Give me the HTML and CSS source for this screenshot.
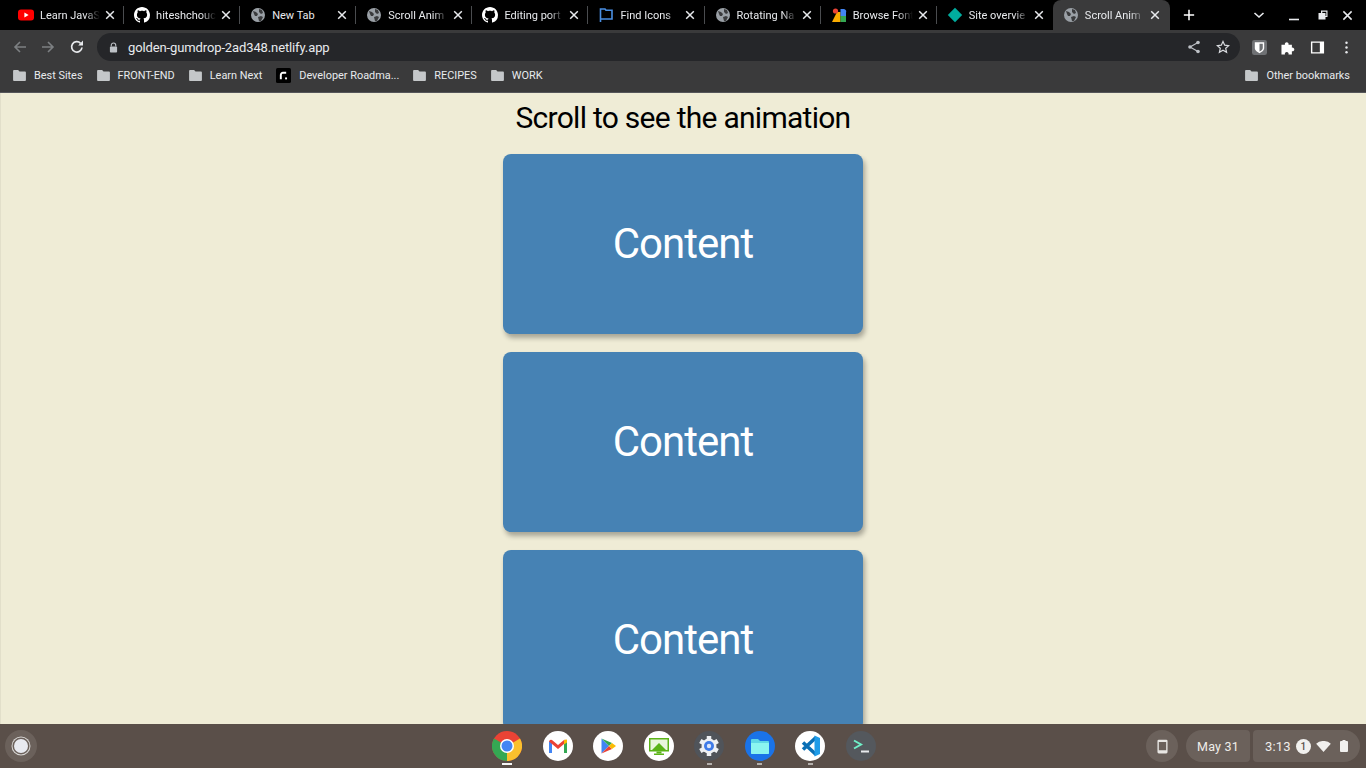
FILE: index.html
```html
<!DOCTYPE html>
<html lang="en">
<head>
  <meta charset="UTF-8">
  <meta name="viewport" content="width=device-width, initial-scale=1.0">
  <title>Scroll Animation</title>
  <link rel="stylesheet" href="styles.css">
</head>
<body>
  <svg class="defs" width="0" height="0">
    <symbol id="globe" viewBox="0 0 16 16">
      <circle cx="8" cy="8" r="7" fill="#9aa0a6"/>
      <path d="M3 4l3 1 2 2-1 2-2 0-1-2zM9 2l3 1 1 3-2 1-2-2zM8 10l3-1 2 1-2 4-2 0z" fill="#3a3b3d"/>
    </symbol>
    <symbol id="github" viewBox="0 0 16 16">
      <path fill="#fff" d="M8 0C3.58 0 0 3.58 0 8c0 3.54 2.29 6.53 5.47 7.59.4.07.55-.17.55-.38 0-.19-.01-.82-.01-1.49-2.01.37-2.53-.49-2.69-.94-.09-.23-.48-.94-.82-1.13-.28-.15-.68-.52-.01-.53.63-.01 1.08.58 1.23.82.72 1.21 1.87.87 2.33.66.07-.52.28-.87.51-1.07-1.78-.2-3.64-.89-3.64-3.95 0-.87.31-1.59.82-2.15-.08-.2-.36-1.02.08-2.12 0 0 .67-.21 2.2.82.64-.18 1.32-.27 2-.27s1.36.09 2 .27c1.53-1.04 2.2-.82 2.2-.82.44 1.1.16 1.92.08 2.12.51.56.82 1.27.82 2.15 0 3.07-1.87 3.75-3.65 3.95.29.25.54.73.54 1.48 0 1.07-.01 1.93-.01 2.2 0 .21.15.46.55.38A8.01 8.01 0 0 0 16 8c0-4.42-3.58-8-8-8z"/>
    </symbol>
    <symbol id="folder" viewBox="0 0 14 12">
      <path fill="#c4c7c9" d="M1 0h4.500l1.500 1.600h6a1 1 0 0 1 1 1V11a1 1 0 0 1-1 1H1a1 1 0 0 1-1-1V1a1 1 0 0 1 1-1z"/>
    </symbol>
    <symbol id="close" viewBox="0 0 10 10">
      <path d="M1.200 1.200l7.600 7.600M8.800 1.200L1.200 8.800" stroke="#e8eaed" stroke-width="1.500" fill="none"/>
    </symbol>
  </svg>

  <!-- Tab strip -->
  <div class="tab-strip">
    <div class="tab">
      <svg class="tab-icon" viewBox="0 0 16 16"><rect y="2.500" width="16" height="11" rx="3" fill="#f00"/><path d="M6.400 5.500l4.200 2.500-4.200 2.500z" fill="#fff"/></svg>
      <span class="tab-title">Learn JavaS</span>
      <svg class="tab-close"><use href="#close"/></svg>
    </div>
    <div class="tab">
      <svg class="tab-icon"><use href="#github"/></svg>
      <span class="tab-title">hiteshchouc</span>
      <svg class="tab-close"><use href="#close"/></svg>
    </div>
    <div class="tab">
      <svg class="tab-icon"><use href="#globe"/></svg>
      <span class="tab-title plain">New Tab</span>
      <svg class="tab-close"><use href="#close"/></svg>
    </div>
    <div class="tab">
      <svg class="tab-icon"><use href="#globe"/></svg>
      <span class="tab-title">Scroll Anim</span>
      <svg class="tab-close"><use href="#close"/></svg>
    </div>
    <div class="tab">
      <svg class="tab-icon"><use href="#github"/></svg>
      <span class="tab-title">Editing port</span>
      <svg class="tab-close"><use href="#close"/></svg>
    </div>
    <div class="tab">
      <svg class="tab-icon" viewBox="0 0 16 16"><path d="M2.500 15V2h4.500l1 1.300h6V12H2.500" stroke="#4a8fe3" stroke-width="1.600" fill="none"/></svg>
      <span class="tab-title">Find Icons</span>
      <svg class="tab-close"><use href="#close"/></svg>
    </div>
    <div class="tab">
      <svg class="tab-icon"><use href="#globe"/></svg>
      <span class="tab-title">Rotating Na</span>
      <svg class="tab-close"><use href="#close"/></svg>
    </div>
    <div class="tab">
      <svg class="tab-icon" viewBox="0 0 16 16"><path d="M1 15L6 5h3.500v10z" fill="#f9ab00"/><circle cx="4.500" cy="4" r="2.600" fill="#ea4335"/><path d="M9.500 2H13a2.500 2.500 0 0 1 2 3.500V9H9.500z" fill="#4285f4"/><rect x="9.500" y="9" width="5.500" height="6" fill="#34a853"/></svg>
      <span class="tab-title">Browse Font</span>
      <svg class="tab-close"><use href="#close"/></svg>
    </div>
    <div class="tab no-sep">
      <svg class="tab-icon" viewBox="0 0 16 16"><path d="M8 .8L15.200 8 8 15.200.8 8z" fill="#00ad9f"/></svg>
      <span class="tab-title">Site overvie</span>
      <svg class="tab-close"><use href="#close"/></svg>
    </div>
    <div class="tab active">
      <svg class="tab-icon"><use href="#globe"/></svg>
      <span class="tab-title">Scroll Anim</span>
      <svg class="tab-close"><use href="#close"/></svg>
    </div>
    <svg class="new-tab" viewBox="0 0 14 14"><path d="M7 1v12M1 7h12" stroke="#fff" stroke-width="1.800"/></svg>
    <div class="window-controls">
      <svg class="win-chevron" viewBox="0 0 12 12"><path d="M1.500 4l4.500 4 4.500-4" stroke="#e8eaed" stroke-width="1.600" fill="none"/></svg>
      <svg class="win-min" viewBox="0 0 12 12"><path d="M1 10.500h10" stroke="#e8eaed" stroke-width="1.600"/></svg>
      <svg class="win-restore" viewBox="0 0 12 12"><path d="M4 1.500h6.500V8H8.500v2.500H1.500V4H4z M5.300 2.800V4H8.500v3h.8V2.800z" fill="#e8eaed" fill-rule="evenodd"/></svg>
      <svg class="win-close" viewBox="0 0 12 12"><path d="M1.500 1.500l9 9M10.500 1.500l-9 9" stroke="#e8eaed" stroke-width="1.600"/></svg>
    </div>
  </div>

  <!-- Address bar -->
  <div class="toolbar">
    <svg class="nav-btn" viewBox="0 0 16 16"><path d="M14 8H3M8 3L3 8l5 5" stroke="#7d8083" stroke-width="1.600" fill="none"/></svg>
    <svg class="nav-btn" viewBox="0 0 16 16"><path d="M2 8h11M8 3l5 5-5 5" stroke="#7d8083" stroke-width="1.600" fill="none"/></svg>
    <svg class="nav-btn reload" viewBox="0 0 16 16"><path d="M13 8.500A5.200 5.200 0 1 1 11.600 4.300" stroke="#e8eaed" stroke-width="1.700" fill="none"/><path d="M14 1.600v4.800H9.200z" fill="#e8eaed"/></svg>
    <div class="omnibox">
      <svg class="lock" viewBox="0 0 10 12"><path d="M2.500 5V3.500a2.500 2.500 0 0 1 5 0V5" stroke="#bdc1c6" stroke-width="1.200" fill="none"/><rect x="1" y="5" width="8" height="6.500" rx="1" fill="#bdc1c6"/></svg>
      <span class="url">golden-gumdrop-2ad348.netlify.app</span>
      <svg class="omni-icon" viewBox="0 0 14 14"><path d="M11 2.500L3 7l8 4.500" stroke="#bdc1c6" stroke-width="1.200" fill="none"/><circle cx="11" cy="2.500" r="1.800" fill="#bdc1c6"/><circle cx="3" cy="7" r="1.800" fill="#bdc1c6"/><circle cx="11" cy="11.500" r="1.800" fill="#bdc1c6"/></svg>
      <svg class="omni-icon" viewBox="0 0 14 14"><path d="M7 1.500l1.700 3.700 4 .4-3 2.700.9 4L7 10.300l-3.600 2 .9-4-3-2.700 4-.4z" stroke="#dadce0" stroke-width="1.200" fill="none"/></svg>
    </div>
    <div class="ext-icons">
      <svg class="ext" viewBox="0 0 16 16"><rect width="16" height="16" rx="2.500" fill="#6f7174"/><path d="M3 2.500h10v6c0 3-3 4.500-5 5.500-2-1-5-2.500-5-5.500z" fill="#fff"/><path d="M8 4h3.500v4.500c0 1.800-2 3-3.500 3.800z" fill="#6f7174"/></svg>
      <svg class="ext" viewBox="0 0 16 16"><path d="M.5 5h3.700a2 2 0 1 1 3.800 0h3.600v3.200a2 2 0 1 1 0 3.800V15.500H8a2 2 0 1 0-3.800 0H.5z" fill="#fff"/></svg>
      <svg class="ext" viewBox="0 0 16 16"><path d="M1 1.500h14v13H1z M2.500 3v10h8V3z" fill="#fff" fill-rule="evenodd"/></svg>
      <svg class="ext" viewBox="0 0 16 16"><circle cx="8" cy="3" r="1.300" fill="#e8eaed"/><circle cx="8" cy="8" r="1.300" fill="#e8eaed"/><circle cx="8" cy="13" r="1.300" fill="#e8eaed"/></svg>
    </div>
  </div>

  <!-- Bookmarks -->
  <div class="bookmarks">
    <div class="bookmark"><svg class="folder"><use href="#folder"/></svg>Best Sites</div>
    <div class="bookmark"><svg class="folder"><use href="#folder"/></svg>FRONT-END</div>
    <div class="bookmark"><svg class="folder"><use href="#folder"/></svg>Learn Next</div>
    <div class="bookmark"><svg class="roadmap" viewBox="0 0 14 14"><rect width="14" height="14" rx="1.500" fill="#000"/><path d="M4.500 10.500V6.500a2 2 0 0 1 2-2h3" stroke="#fff" stroke-width="1.800" fill="none"/><rect x="8.500" y="8.800" width="1.800" height="1.800" fill="#fff"/></svg>Developer Roadma...</div>
    <div class="bookmark"><svg class="folder"><use href="#folder"/></svg>RECIPES</div>
    <div class="bookmark"><svg class="folder"><use href="#folder"/></svg>WORK</div>
    <div class="bookmark other"><svg class="folder"><use href="#folder"/></svg>Other bookmarks</div>
  </div>

  <!-- Page content -->
  <main class="page">
    <h1>Scroll to see the animation</h1>
    <div class="box">Content</div>
    <div class="box">Content</div>
    <div class="box">Content</div>
  </main>

  <!-- ChromeOS shelf -->
  <footer class="shelf">
    <div class="launcher"><span class="launcher-dot"></span></div>
    <div class="apps">
      <div class="app running">
        <svg viewBox="0 0 30 30">
          <circle cx="15" cy="15" r="15" fill="#ea4335"/>
          <path d="M15 15L2 7.500A15 15 0 0 0 15 30z" fill="#34a853"/>
          <path d="M15 15l13-7.500A15 15 0 0 1 15 30z" fill="#fbc02d"/>
          <circle cx="15" cy="15" r="7" fill="#fff"/>
          <circle cx="15" cy="15" r="5.500" fill="#4285f4"/>
        </svg>
      </div>
      <div class="app">
        <svg viewBox="0 0 30 30">
          <circle cx="15" cy="15" r="15" fill="#fff"/>
          <path d="M6 22V10.500L9 9.500V22z" fill="#4285f4"/>
          <path d="M21 22V9.500l3 1V22z" fill="#34a853"/>
          <path d="M6 10.500a2 2 0 0 1 3-1.500l6 5 6-5a2 2 0 0 1 3 1.500l-9 7.500z" fill="#ea4335"/>
          <path d="M21 9l3-.5v3l-3 2z" fill="#fbbc04"/>
        </svg>
      </div>
      <div class="app">
        <svg viewBox="0 0 30 30">
          <circle cx="15" cy="15" r="15" fill="#fff"/>
          <path d="M8.500 7.500v15L16 15z" fill="#4285f4"/>
          <path d="M8.500 7.500L16 15l3-3z" fill="#34a853"/>
          <path d="M8.500 22.500L16 15l3 3z" fill="#ea4335"/>
          <path d="M19 12l4 3-4 3-3-3z" fill="#fbbc04"/>
        </svg>
      </div>
      <div class="app">
        <svg viewBox="0 0 30 30">
          <circle cx="15" cy="15" r="15" fill="#fff"/>
          <rect x="5" y="7" width="20" height="13.500" fill="#5bb318"/>
          <rect x="6.500" y="8.500" width="17" height="10.500" fill="#e9f6dc"/>
          <path d="M8 19l7-7 7 7z" fill="#5bb318"/>
          <rect x="12.500" y="20.500" width="5" height="2" fill="#5bb318"/>
          <rect x="10" y="22.500" width="10" height="1.500" fill="#5bb318"/>
        </svg>
      </div>
      <div class="app dot">
        <svg viewBox="0 0 30 30">
          <circle cx="15" cy="15" r="15" fill="#50545a"/>
          <circle cx="15" cy="15" r="7.500" fill="#eef0f3"/>
          <path d="M15 5v20M6.300 10l17.400 10M6.300 20l17.400-10" stroke="#eef0f3" stroke-width="4.500"/>
          <circle cx="15" cy="15" r="5" fill="#3f7be8"/>
          <circle cx="15" cy="15" r="2.200" fill="#dbe6fb"/>
        </svg>
      </div>
      <div class="app dot">
        <svg viewBox="0 0 30 30">
          <circle cx="15" cy="15" r="15" fill="#1a73e8"/>
          <path d="M6 9a1 1 0 0 1 1-1h6l2 2h8a1 1 0 0 1 1 1V22a1 1 0 0 1-1 1H7a1 1 0 0 1-1-1z" fill="#5fd8e6"/>
          <path d="M6 12h18v10a1 1 0 0 1-1 1H7a1 1 0 0 1-1-1z" fill="#8bf5f0"/>
        </svg>
      </div>
      <div class="app dot">
        <svg viewBox="0 0 30 30">
          <circle cx="15" cy="15" r="15" fill="#fff"/>
          <path d="M21 6.500L8 18.500M8 11.500L21 23.500" stroke="#0a6fb5" stroke-width="3.600"/>
          <path d="M19.500 4.500l5.500 2.500v16l-5.500 2.500z" fill="#1f9ce8"/>
        </svg>
      </div>
      <div class="app">
        <svg viewBox="0 0 30 30">
          <circle cx="15" cy="15" r="15" fill="#54585d"/>
          <path d="M8 9.500l7 4-7 4" stroke="#6ff0c8" stroke-width="2" fill="none"/>
          <path d="M15 20.500h8" stroke="#e8eaed" stroke-width="2"/>
        </svg>
      </div>
    </div>
    <div class="tray">
      <div class="tray-phone">
        <svg viewBox="0 0 12 16"><path d="M2 .5h8a1.500 1.500 0 0 1 1.500 1.500v12a1.500 1.500 0 0 1-1.500 1.500H2A1.500 1.500 0 0 1 .5 14V2A1.500 1.500 0 0 1 2 .5zM2 3v9h8V3z" fill="#e8e6e3" fill-rule="evenodd"/></svg>
      </div>
      <div class="tray-pill date">May 31</div>
      <div class="tray-pill time">
        <span>3:13</span>
        <span class="badge">1</span>
        <svg class="wifi" viewBox="0 0 16 12"><path d="M0 3a12 12 0 0 1 16 0L8 12z" fill="#f1f0ee"/></svg>
        <svg class="battery" viewBox="0 0 8 12"><path d="M2.500 0h3v1H7a1 1 0 0 1 1 1v9a1 1 0 0 1-1 1H1a1 1 0 0 1-1-1V2a1 1 0 0 1 1-1h1.500z" fill="#f1f0ee"/></svg>
      </div>
    </div>
  </footer>
</body>
</html>
```

FILE: styles.css
```css
* {
  box-sizing: border-box;
}

body {
  margin: 0;
  height: 100vh;
  overflow: hidden;
  display: flex;
  flex-direction: column;
  background-color: #efecd6;
  font-family: Roboto, sans-serif;
}

.defs {
  position: absolute;
}

/* Tab strip */
.tab-strip {
  height: 30px;
  flex-shrink: 0;
  display: flex;
  align-items: center;
  padding-left: 8px;
  background-color: #000;
  color: #e8eaed;
  font-size: 11px;
}

.tab {
  width: 116.1px;
  height: 30px;
  display: flex;
  align-items: center;
  padding-left: 10px;
  position: relative;
}

.tab::after {
  content: "";
  position: absolute;
  top: 6px;
  right: 0;
  width: 1px;
  height: 18px;
  background-color: #4a4c4f;
}

.tab.no-sep::after,
.tab.active::after {
  display: none;
}

.tab.active {
  width: 117px;
  background-color: #3a3a3b;
  border-radius: 8px 8px 0 0;
}

.tab-icon {
  width: 16px;
  height: 16px;
  flex-shrink: 0;
}

.tab-title {
  width: 60px;
  margin-left: 6px;
  overflow: hidden;
  white-space: nowrap;
  -webkit-mask-image: linear-gradient(to right, #000 75%, transparent 100%);
  mask-image: linear-gradient(to right, #000 75%, transparent 100%);
}

.tab-title.plain {
  -webkit-mask-image: none;
  mask-image: none;
}

.tab-close {
  width: 10px;
  height: 10px;
  margin-left: 5px;
  flex-shrink: 0;
}

.new-tab {
  width: 12px;
  height: 12px;
  margin-left: 13px;
}

.window-controls {
  margin-left: auto;
  display: flex;
  align-items: center;
  padding-right: 13px;
}

.win-chevron,
.win-min,
.win-restore {
  width: 12px;
  height: 12px;
}

.win-min {
  margin-left: 23px;
}

.win-restore {
  margin-left: 17px;
}

.win-close {
  width: 11px;
  height: 11px;
  margin-left: 13px;
}

/* Toolbar */
.toolbar {
  height: 31px;
  flex-shrink: 0;
  display: flex;
  align-items: center;
  padding-top: 3px;
  padding-left: 12px;
  gap: 12px;
  background-color: #3a3a3b;
}

.nav-btn {
  width: 16px;
  height: 16px;
}

.reload {
  margin-left: 1px;
}

.omnibox {
  width: 1143px;
  height: 28px;
  display: flex;
  align-items: center;
  padding-left: 12px;
  padding-right: 10px;
  border-radius: 14px;
  background-color: #252629;
  color: #e8eaed;
  font-size: 13px;
}

.lock {
  width: 9px;
  height: 11px;
}

.url {
  margin-left: 10px;
  margin-right: auto;
  letter-spacing: -0.12px;
}

.omni-icon {
  width: 14px;
  height: 14px;
  margin-left: 15px;
}

.ext-icons {
  display: flex;
  align-items: center;
  gap: 14px;
}

.ext {
  width: 15px;
  height: 15px;
}

/* Bookmarks bar */
.bookmarks {
  height: 32px;
  flex-shrink: 0;
  display: flex;
  align-items: center;
  padding: 0 16px 2px 13px;
  gap: 14px;
  background-color: #3a3a3b;
  border-bottom: 1px solid #55565a;
  color: #e8eaed;
  font-size: 10.9px;
}

.bookmark {
  display: flex;
  align-items: center;
  gap: 8px;
}

.bookmark.other {
  margin-left: auto;
}

.folder {
  width: 13px;
  height: 11px;
}

.roadmap {
  width: 15px;
  height: 15px;
}

/* Page */
.page {
  flex: 1;
  min-height: 0;
  overflow: hidden;
  display: flex;
  flex-direction: column;
  align-items: center;
  box-shadow: inset 1px 0 0 #e2dfca;
}

h1 {
  margin: 7px 0 18px;
  font-size: 30px;
  line-height: 36px;
  font-weight: 400;
  letter-spacing: -0.73px;
  color: #000;
}

.box {
  width: 360px;
  height: 180px;
  flex-shrink: 0;
  margin-bottom: 18px;
  padding-bottom: 2px;
  display: flex;
  align-items: center;
  justify-content: center;
  border-radius: 8px;
  background-color: #4682b4;
  box-shadow: 2px 4px 5px rgba(0, 0, 0, 0.3);
  color: #fff;
  font-size: 42px;
  letter-spacing: -1px;
}

/* Shelf */
.shelf {
  height: 44px;
  flex-shrink: 0;
  display: grid;
  grid-template-columns: 1fr auto 1fr;
  align-items: center;
  background-color: #5a4f49;
  color: #efedea;
  font-size: 13px;
}

.launcher {
  width: 32px;
  height: 32px;
  margin-left: 5px;
  display: flex;
  align-items: center;
  justify-content: center;
  border-radius: 50%;
  background-color: #6b615b;
}

.launcher-dot {
  width: 14px;
  height: 14px;
  border-radius: 50%;
  background-color: #e8eaf0;
  box-shadow: 0 0 0 1.5px #6b615b, 0 0 0 2.5px #d8d6d4;
}

.apps {
  display: flex;
  gap: 20.5px;
  padding-left: 2px;
}

.app {
  width: 30px;
  height: 30px;
  position: relative;
}

.app svg {
  display: block;
  width: 30px;
  height: 30px;
}

.app.running::after,
.app.dot::after {
  content: "";
  position: absolute;
  left: 50%;
  bottom: -4px;
  width: 5px;
  height: 2px;
  margin-left: -2.5px;
  background-color: #b5b0ac;
}

.app.running::after {
  width: 10px;
  margin-left: -5px;
  background-color: #f5f5f5;
}

.tray {
  display: flex;
  align-items: center;
  justify-content: flex-end;
  padding-right: 6px;
}

.tray-phone {
  width: 32px;
  height: 32px;
  margin-right: 8px;
  display: flex;
  align-items: center;
  justify-content: center;
  border-radius: 50%;
  background-color: #6b615b;
}

.tray-phone svg {
  width: 11px;
  height: 15px;
}

.tray-pill {
  height: 32px;
  display: flex;
  align-items: center;
  background-color: #6b615b;
}

.date {
  width: 64px;
  justify-content: center;
  margin-right: 3px;
  border-radius: 16px 4px 4px 16px;
  font-size: 12.5px;
  letter-spacing: 0.2px;
}

.time {
  width: 107px;
  padding-left: 12px;
  gap: 5px;
  border-radius: 4px 16px 16px 4px;
  letter-spacing: 0.2px;
}

.badge {
  width: 15px;
  height: 15px;
  display: flex;
  align-items: center;
  justify-content: center;
  border-radius: 50%;
  background-color: #f1f0ee;
  color: #5a4f49;
  font-size: 10px;
  font-weight: 500;
}

.wifi {
  width: 15px;
  height: 11px;
}

.battery {
  width: 8px;
  height: 12px;
  margin-left: 4px;
}
```
